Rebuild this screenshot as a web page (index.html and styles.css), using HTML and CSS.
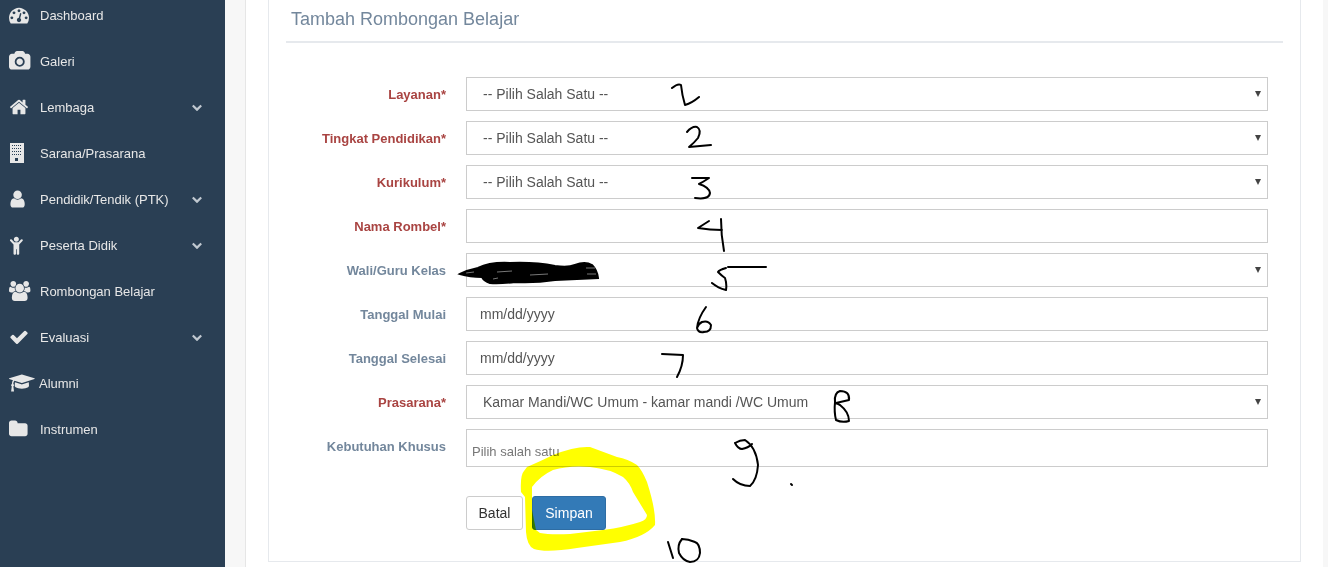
FILE: index.html
```html
<!DOCTYPE html>
<html lang="id">
<head>
    <meta charset="UTF-8">
    <meta name="viewport" content="width=device-width, initial-scale=1.0">
    <title>Tambah Rombongan Belajar</title>
    <link rel="stylesheet" href="styles.css">
</head>
<body>
    <!-- icon sprite -->
    <svg class="sprite" xmlns="http://www.w3.org/2000/svg">
        <symbol id="i-dashboard" viewBox="0 0 1792 1792" preserveAspectRatio="xMinYMid meet"><path d="M384 1152q0-53-37.5-90.5t-90.5-37.5-90.5 37.5-37.5 90.5 37.5 90.5 90.5 37.5 90.5-37.5 37.5-90.5zm192-448q0-53-37.5-90.5t-90.5-37.5-90.5 37.5-37.5 90.5 37.5 90.5 90.5 37.5 90.5-37.5 37.5-90.5zm428 481l101-382q6-26-7.5-48.5t-38.5-29.5-48 6.5-30 39.5l-101 382q-60 5-107 43.5t-63 98.5q-20 77 20 146t117 89 146-20 89-117q16-60-6-117t-72-91zm660-33q0-53-37.5-90.5t-90.5-37.5-90.5 37.5-37.5 90.5 37.5 90.5 90.5 37.5 90.5-37.5 37.5-90.5zm-640-640q0-53-37.5-90.5t-90.5-37.5-90.5 37.5-37.5 90.5 37.5 90.5 90.5 37.5 90.5-37.5 37.5-90.5zm448 192q0-53-37.5-90.5t-90.5-37.5-90.5 37.5-37.5 90.5 37.5 90.5 90.5 37.5 90.5-37.5 37.5-90.5zm320 448q0 261-141 483-19 29-54 29h-1402q-35 0-54-29-141-221-141-483 0-182 71-348t191-286 286-191 348-71 348 71 286 191 191 286 71 348z"/></symbol>
        <symbol id="i-camera" viewBox="0 0 1920 1792" preserveAspectRatio="xMinYMid meet"><path d="M960 672q119 0 203.5 84.5t84.5 203.5-84.5 203.5-203.5 84.5-203.5-84.5-84.5-203.5 84.5-203.5 203.5-84.5zm704-416q106 0 181 75t75 181v896q0 106-75 181t-181 75h-1408q-106 0-181-75t-75-181v-896q0-106 75-181t181-75h224l51-136q19-49 69.5-84.5t103.5-35.5h512q53 0 103.5 35.5t69.5 84.5l51 136h224zm-704 1152q185 0 316.5-131.5t131.5-316.5-131.5-316.5-316.5-131.5-316.5 131.5-131.5 316.5 131.5 316.5 316.5 131.5z"/></symbol>
        <symbol id="i-home" viewBox="0 0 1792 1792" preserveAspectRatio="xMinYMid meet"><path d="M1472 992v480q0 26-19 45t-45 19h-384v-384h-256v384h-384q-26 0-45-19t-19-45v-480q0-1 .5-3t.5-3l575-474 575 474q1 2 1 6zm223-69l-62 74q-8 9-21 11h-3q-13 0-21-7l-692-577-692 577q-12 8-24 7-13-2-21-11l-62-74q-8-10-7-23.5t11-21.5l719-599q32-26 76-26t76 26l244 204v-195q0-14 9-23t23-9h192q14 0 23 9t9 23v408l219 182q10 8 11 21.5t-7 23.5z"/></symbol>
        <symbol id="i-building" viewBox="0 0 16 20" preserveAspectRatio="xMinYMid meet">
            <path fill-rule="evenodd" d="M1 0h14v20h-14zM3 2v1h1v-1zM5 2v1h1v-1zM7 2v1h1v-1zM9 2v1h1v-1zM11 2v1h1v-1zM3 5v1h1v-1zM5 5v1h1v-1zM7 5v1h1v-1zM9 5v1h1v-1zM11 5v1h1v-1zM3 8v1h1v-1zM5 8v1h1v-1zM7 8v1h1v-1zM9 8v1h1v-1zM11 8v1h1v-1zM3 11v1h1v-1zM5 11v1h1v-1zM7 11v1h1v-1zM9 11v1h1v-1zM11 11v1h1v-1zM6 15v3h3v-3z"/>
        </symbol>
        <symbol id="i-user" viewBox="128 0 1408 1792" preserveAspectRatio="xMinYMid meet"><path d="M1536 1399q0 109-62.5 187t-150.5 78h-854q-88 0-150.5-78t-62.5-187q0-85 8.5-160.5t31.5-152 58.5-131 94-89 134.5-34.5q131 128 313 128t313-128q76 0 134.5 34.5t94 89 58.5 131 31.5 152 8.5 160.5zm-256-887q0 159-112.5 271.5t-271.5 112.5-271.5-112.5-112.5-271.5 112.5-271.5 271.5-112.5 271.5 112.5 112.5 271.5z"/></symbol>
        <symbol id="i-child" viewBox="-20 0 1280 1792" preserveAspectRatio="xMinYMid meet"><path d="M1188 548l-292 292v824q0 46-33 79t-79 33-79-33-33-79v-384h-64v384q0 46-33 79t-79 33-79-33-33-79v-824l-292-292q-28-28-28-68t28-68 68-28 68 28l228 228h368l228-228q28-28 68-28t68 28 28 68-28 68zm-324-164q0 93-65.5 158.5t-158.5 65.5-158.5-65.5-65.5-158.5 65.5-158.5 158.5-65.5 158.5 65.5 65.5 158.5z"/></symbol>
        <symbol id="i-users" viewBox="0 0 1920 1792" preserveAspectRatio="xMinYMid meet"><path d="M593 896q-162 5-265 128h-134q-82 0-138-40.5t-56-118.5q0-353 124-353 6 0 43.5 21t97.5 42.5 119 21.5q67 0 133-23-5 37-5 66 0 139 81 256zm1071 637q0 120-73 189.5t-194 69.5h-874q-121 0-194-69.5t-73-189.5q0-53 3.5-103.5t14-109 26.5-108.5 43-97.5 62-81 85.5-53.5 111.5-20q10 0 43 21.5t73 48 107 48 135 21.5 135-21.5 107-48 73-48 43-21.5q61 0 111.5 20t85.5 53.5 62 81 43 97.5 26.5 108.5 14 109 3.5 103.5zm-1024-1277q0 106-75 181t-181 75-181-75-75-181 75-181 181-75 181 75 75 181zm704 384q0 159-112.5 271.5t-271.5 112.5-271.5-112.5-112.5-271.5 112.5-271.5 271.5-112.5 271.5 112.5 112.5 271.5zm576 225q0 78-56 118.5t-138 40.5h-134q-103-123-265-128 81-117 81-256 0-29-5-66 66 23 133 23 59 0 119-21.5t97.5-42.5 43.5-21q124 0 124 353zm-128-609q0 106-75 181t-181 75-181-75-75-181 75-181 181-75 181 75 75 181z"/></symbol>
        <symbol id="i-check" viewBox="0 0 1792 1792" preserveAspectRatio="xMinYMid meet"><path d="M1671 566q0 40-28 68l-724 724-136 136q-28 28-68 28t-68-28l-136-136-362-362q-28-28-28-68t28-68l136-136q28-28 68-28t68 28l294 295 656-657q28-28 68-28t68 28l136 136q28 28 28 68z"/></symbol>
        <symbol id="i-cap" viewBox="0 0 2304 1792" preserveAspectRatio="xMinYMid meet"><path d="M1774 836l18 316q4 69-82 128t-235 93.5-323 34.5-323-34.5-235-93.5-82-128l18-316 574 181q22 7 48 7t48-7zm530-324q0 23-22 31l-1120 352q-4 1-10 1t-10-1l-652-206q-43 34-71 111.5t-34 178.5q63 36 63 109 0 69-58 107l58 433q2 14-8 25-9 11-24 11h-192q-15 0-24-11-10-11-8-25l58-433q-58-38-58-107 0-73 65-111 11-207 98-330l-333-104q-22-8-22-31t22-31l1120-352q4-1 10-1t10 1l1120 352q22 8 22 31z"/></symbol>
        <symbol id="i-folder" viewBox="64 0 1664 1792" preserveAspectRatio="xMinYMid meet"><path d="M1728 608v704q0 92-66 158t-158 66h-1216q-92 0-158-66t-66-158v-960q0-92 66-158t158-66h320q92 0 158 66t66 158v32h672q92 0 158 66t66 158z"/></symbol>
        <symbol id="i-chevron" viewBox="64 0 1664 1792"><path d="M1683 808l-742 741q-19 19-45 19t-45-19l-742-741q-19-19-19-45.5t19-45.5l166-165q19-19 45-19t45 19l531 531 531-531q19-19 45-19t45 19l166 165q19 19 19 45.5t-19 45.5z"/></symbol>
    </svg>

    <div class="layout">
        <aside class="sidebar">
            <ul class="side-menu">
                <li><a href="#"><svg class="nav-icon"><use href="#i-dashboard"/></svg>Dashboard</a></li>
                <li><a href="#"><svg class="nav-icon"><use href="#i-camera"/></svg>Galeri</a></li>
                <li><a href="#"><svg class="nav-icon"><use href="#i-home"/></svg>Lembaga<svg class="chevron"><use href="#i-chevron"/></svg></a></li>
                <li><a href="#"><svg class="nav-icon"><use href="#i-building"/></svg>Sarana/Prasarana</a></li>
                <li><a href="#"><svg class="nav-icon"><use href="#i-user"/></svg>Pendidik/Tendik (PTK)<svg class="chevron"><use href="#i-chevron"/></svg></a></li>
                <li><a href="#"><svg class="nav-icon"><use href="#i-child"/></svg>Peserta Didik<svg class="chevron"><use href="#i-chevron"/></svg></a></li>
                <li><a href="#"><svg class="nav-icon"><use href="#i-users"/></svg>Rombongan Belajar</a></li>
                <li><a href="#"><svg class="nav-icon"><use href="#i-check"/></svg>Evaluasi<svg class="chevron"><use href="#i-chevron"/></svg></a></li>
                <li><a href="#"><svg class="nav-icon nav-icon-wide"><use href="#i-cap"/></svg>Alumni</a></li>
                <li><a href="#"><svg class="nav-icon"><use href="#i-folder"/></svg>Instrumen</a></li>
            </ul>
        </aside>

        <main class="main">
            <div class="content">
                <section class="panel">
                    <div class="panel-title">
                        <h2>Tambah Rombongan Belajar</h2>
                    </div>
                    <form class="form">
                        <label class="label required" for="layanan">Layanan*</label>
                        <div class="select-wrap">
                            <select id="layanan" class="control select"><option>-- Pilih Salah Satu --</option></select>
                        </div>

                        <label class="label required" for="tingkat">Tingkat Pendidikan*</label>
                        <div class="select-wrap">
                            <select id="tingkat" class="control select"><option>-- Pilih Salah Satu --</option></select>
                        </div>

                        <label class="label required" for="kurikulum">Kurikulum*</label>
                        <div class="select-wrap">
                            <select id="kurikulum" class="control select"><option>-- Pilih Salah Satu --</option></select>
                        </div>

                        <label class="label required" for="nama">Nama Rombel*</label>
                        <input id="nama" class="control" type="text">

                        <label class="label" for="wali">Wali/Guru Kelas</label>
                        <div class="select-wrap">
                            <select id="wali" class="control select"><option></option></select>
                        </div>

                        <label class="label" for="mulai">Tanggal Mulai</label>
                        <input id="mulai" class="control" type="text" value="mm/dd/yyyy">

                        <label class="label" for="selesai">Tanggal Selesai</label>
                        <input id="selesai" class="control" type="text" value="mm/dd/yyyy">

                        <label class="label required" for="prasarana">Prasarana*</label>
                        <div class="select-wrap">
                            <select id="prasarana" class="control select"><option>Kamar Mandi/WC Umum - kamar mandi /WC Umum</option></select>
                        </div>

                        <label class="label" for="khusus">Kebutuhan Khusus</label>
                        <input id="khusus" class="control control-tags" type="text" placeholder="Pilih salah satu">

                        <div class="actions">
                            <button type="button" class="btn btn-cancel">Batal</button>
                            <button type="button" class="btn btn-primary">Simpan</button>
                        </div>
                    </form>
                </section>
            </div>
        </main>
    </div>

    <!-- coretan tangan di atas screenshot -->
    <svg class="ink" viewBox="0 0 1328 567" xmlns="http://www.w3.org/2000/svg">
        <path class="marker" fill-rule="evenodd" d="M524 471Q520 475 521 492L525 497L526 532Q527 546 534 549Q546 553 577 548L620 542Q645 537 655 525Q656 510 647 482Q642 470 637 465Q628 459 617 457L590 447Q575 446 553 455Q543 460 527 467ZM532 487Q540 476 553 470Q570 465 590 467Q610 469 623 477Q630 483 633 492L647 515Q647 520 640 522Q625 527 603 530L570 534Q550 535 540 533L536 530L532 510Z"/>
        <path class="scribble" d="M460 274Q468 270 478 268Q490 262 510 263Q535 262 555 266Q568 268 575 265Q585 261 592 265Q597 270 598 278Q575 279 555 280Q535 283 515 282Q498 284 490 283Q484 281 482 277Q470 277 460 274Z"/>
        <path class="fleck" d="M497 272L512 271M530 275L548 274M586 268L595 268M587 274L596 274M493 279L498 278M466 273L474 272"/>
        <g class="pen">
            <path d="M672 88Q678 83 681 85Q682 95 685 105Q692 103 699 97"/>
            <path d="M687 132Q692 126 697 127Q702 130 698 138Q694 143 689 147Q700 146 711 145"/>
            <path d="M692 178L709 178Q703 182 699 184Q709 187 710 193Q709 200 695 198"/>
            <path d="M709 221L698 228Q710 230 722 230M721 219Q721 235 724 251"/>
            <path d="M728 267L766 267M726 268Q719 270 718 272Q722 276 725 278Q727 284 726 290Q718 288 712 283"/>
            <path d="M706 307Q698 318 697 328Q698 333 704 332Q711 332 711 325Q708 320 702 322Q698 324 697 328"/>
            <path d="M662 354L683 355Q683 366 677 377"/>
            <path d="M849 400Q850 391 840 391Q834 393 835 402Q834 412 836 420Q842 423 849 421Q849 412 840 405Q836 403 835 403M836 403L849 400"/>
            <path d="M735 443Q740 440 745 440Q756 447 758 465Q757 480 750 486Q740 486 733 479M735 443Q738 449 742 449Q748 448 752 444"/>
            <path d="M791 484L792 485"/>
            <path d="M668 542L673 558M682 539Q677 545 679 553Q683 561 690 562Q699 562 700 553Q700 544 695 542Q688 539 682 539"/>
        </g>
    </svg>
</body>
</html>
```

FILE: styles.css
```css
/* basic */
* {
    box-sizing: border-box;
}

html, body {
    height: 100%;
}

body {
    margin: 0;
    overflow: hidden;
    background-color: #fff;
    font-family: "Liberation Sans", Arial, sans-serif;
    font-size: 13px;
    color: #73879c;
}

.sprite {
    display: none;
}

.layout {
    display: flex;
    height: 567px;
    overflow: hidden;
}

/* sidebar */
.sidebar {
    flex: 0 0 225px;
    background-color: #2a3f54;
}

.side-menu {
    list-style: none;
    margin: -8px 0 0;
    padding: 0;
}

.side-menu a {
    display: flex;
    align-items: center;
    height: 46px;
    padding: 0 23px 0 9px;
    color: #e7e7e7;
    text-decoration: none;
}

.nav-icon {
    flex: 0 0 31px;
    height: 20px;
    fill: #e7e7e7;
}

.nav-icon-wide {
    flex-basis: 30px;
}

.chevron {
    width: 10px;
    height: 12px;
    margin-left: auto;
    fill: #c0c8d0;
}

/* main column */
.main {
    flex: 1;
    min-width: 0;
    padding: 0 5px 0 20px;
    background-color: #f7f7f7;
}

.content {
    height: 100%;
    padding: 0 22px;
    background-color: #fff;
    border-left: 1px solid #e6e6e6;
}

.panel {
    height: 562px;
    padding: 0 17px;
    background-color: #fff;
    border: 1px solid #e6e9ed;
    border-top: 0;
}

.panel-title {
    height: 43px;
    padding-left: 5px;
    border-bottom: 2px solid #e6e9ed;
}

.panel-title h2 {
    margin: 0;
    font-size: 18px;
    font-weight: 400;
    line-height: 38px;
    color: #73879c;
}

/* form */
.form {
    display: grid;
    grid-template-columns: 160px 1fr;
    column-gap: 20px;
    row-gap: 10px;
    padding: 34px 15px 0 0;
}

.label {
    height: 34px;
    font-weight: 700;
    line-height: 35px;
    text-align: right;
}

.required {
    color: #a94442;
}

.control {
    display: block;
    width: 100%;
    height: 34px;
    padding: 6px 12px;
    background-color: #fff;
    border: 1px solid #ccc;
    border-radius: 0;
    font-family: inherit;
    font-size: 14px;
    color: #555;
    outline: none;
}

input.control {
    padding-left: 13px;
}

.select-wrap {
    position: relative;
}

.select-wrap::after {
    content: "";
    position: absolute;
    top: 14px;
    right: 7px;
    border-left: 3px solid transparent;
    border-right: 3px solid transparent;
    border-top: 6px solid #444;
}

.select {
    padding-left: 16px;
    appearance: none;
}

input.control-tags {
    height: 38px;
    padding: 9px 5px 3px;
    font-size: 13px;
}

.control-tags::placeholder {
    color: #777;
}

.actions {
    grid-column: 2;
    display: flex;
    gap: 9px;
    margin-top: 19px;
}

.btn {
    height: 34px;
    padding: 6px 0;
    background-color: #fff;
    border: 1px solid #ccc;
    border-radius: 3px;
    font-family: inherit;
    font-size: 14px;
    color: #333;
    cursor: pointer;
}

.btn-cancel {
    width: 57px;
}

.btn-primary {
    width: 74px;
    background-color: #337ab7;
    border-color: #2e6da4;
    color: #fff;
}

/* hand annotations over the page */
.ink {
    position: absolute;
    top: 0;
    left: 0;
    width: 1328px;
    height: 567px;
    pointer-events: none;
    mix-blend-mode: multiply;
}

.marker {
    fill: #ffff00;
}

.scribble {
    fill: #000;
    stroke: #000;
    stroke-width: 2;
}

.fleck {
    fill: none;
    stroke: #777;
    stroke-width: 1;
}

.pen path {
    fill: none;
    stroke: #000;
    stroke-width: 2;
    stroke-linecap: round;
    stroke-linejoin: round;
}
```
